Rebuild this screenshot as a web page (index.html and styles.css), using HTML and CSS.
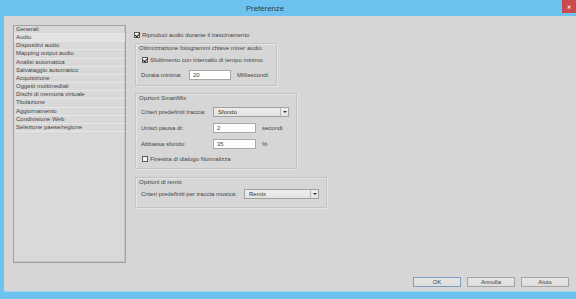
FILE: index.html
```html
<!DOCTYPE html>
<html lang="it">
<head>
    <meta charset="UTF-8">
    <title>Preferenze</title>
    <link rel="stylesheet" href="styles.css">
</head>
<body>
    <div class="window">
        <div class="titlebar">
            <span class="title">Preferenze</span>
            <span class="close">&#x2715;</span>
        </div>
        <div class="frame">
            <div class="main">
                <ul class="list">
                    <li>Generali</li>
                    <li class="selected">Audio</li>
                    <li>Dispositivi audio</li>
                    <li>Mapping output audio</li>
                    <li>Analisi automatica</li>
                    <li>Salvataggio automatico</li>
                    <li>Acquisizione</li>
                    <li>Oggetti multimediali</li>
                    <li>Dischi di memoria virtuale</li>
                    <li>Titolazione</li>
                    <li>Aggiornamento</li>
                    <li>Condivisione Web</li>
                    <li>Selezione paese/regione</li>
                </ul>

                <div class="panel">
                    <div class="check-row top-check">
                        <span class="box checked"></span>
                        <span>Riproduci audio durante il trascinamento</span>
                    </div>

                    <div class="group group-keyframes">
                        <div class="group-label">Ottimizzazione fotogrammi chiave mixer audio</div>
                        <div class="check-row inner-check">
                            <span class="box checked"></span>
                            <span>Sfoltimento con intervallo di tempo minimo</span>
                        </div>
                        <div class="field-row first-field">
                            <span class="label label-short">Durata minima:</span>
                            <span class="input input-ms">20</span>
                            <span class="unit">Millisecondi</span>
                        </div>
                    </div>

                    <div class="group group-smartmix">
                        <div class="group-label">Opzioni SmartMix</div>
                        <div class="field-row select-row">
                            <span class="label label-mid">Criteri predefiniti traccia:</span>
                            <span class="select select-mid">Sfondo<span class="arrow"></span></span>
                        </div>
                        <div class="field-row">
                            <span class="label label-mid">Unisci pausa di:</span>
                            <span class="input input-mid">2</span>
                            <span class="unit">secondi</span>
                        </div>
                        <div class="field-row">
                            <span class="label label-mid">Abbassa sfondo:</span>
                            <span class="input input-mid">35</span>
                            <span class="unit">%</span>
                        </div>
                        <div class="check-row last-check">
                            <span class="box"></span>
                            <span>Finestra di dialogo Normalizza</span>
                        </div>
                    </div>

                    <div class="group group-remix">
                        <div class="group-label">Opzioni di remix</div>
                        <div class="field-row remix-row">
                            <span class="label label-long">Criteri predefiniti per traccia musica:</span>
                            <span class="select select-long">Remix<span class="arrow"></span></span>
                        </div>
                    </div>
                </div>
            </div>

            <div class="footer">
                <button class="btn default">OK</button>
                <button class="btn">Annulla</button>
                <button class="btn">Aiuto</button>
            </div>
        </div>
    </div>
</body>
</html>
```

FILE: styles.css
```css
* {
    box-sizing: border-box;
}
body {
    margin: 0;
    font-family: "Liberation Sans", Arial, sans-serif;
    font-size: 6px;
    color: #444;
}
.window {
    width: 576px;
    height: 299px;
    display: flex;
    flex-direction: column;
    background-color: #d6d6d6;
    overflow: hidden;
}
.titlebar {
    height: 16px;
    flex-shrink: 0;
    background-color: #6dc2ef;
    display: flex;
    align-items: center;
    justify-content: center;
    padding-right: 46px;
    position: relative;
}
.title {
    font-size: 7.8px;
    color: #2b3f52;
    margin-top: 1px;
}
.close {
    position: absolute;
    top: 0;
    right: 0;
    width: 14px;
    height: 13px;
    background-color: #c9494f;
    color: #fff;
    font-size: 5px;
    font-weight: bold;
    display: flex;
    align-items: center;
    justify-content: center;
}
.frame {
    flex: 1;
    display: flex;
    flex-direction: column;
    border-left: 4px solid #6dc2ef;
    border-bottom: 7px solid #6dc2ef;
    box-shadow: inset 0 -1px 0 #9fd5f2;
}
.main {
    display: flex;
    padding-top: 9px;
    padding-left: 9px;
}
.list {
    list-style: none;
    margin: 0;
    padding: 0;
    width: 113px;
    height: 238px;
    background-color: #d9d9d9;
    border: 1px solid #a2a2a2;
    box-shadow: inset -1px -1px 0 #c2c2c2;
}
.list li {
    height: 8.17px;
    line-height: 7.4px;
    padding-left: 2px;
    border-bottom: 1px solid #e6e6e6;
    white-space: nowrap;
}
.list li.selected {
    background-color: #e3e3e3;
}
.panel {
    margin-left: 8px;
    display: flex;
    flex-direction: column;
    align-items: flex-start;
}
.check-row {
    display: flex;
    align-items: center;
    height: 8px;
    white-space: nowrap;
}
.box {
    width: 6px;
    height: 6px;
    border: 1px solid #5a5a5a;
    background-color: #f4f4f4;
    margin-right: 2px;
    position: relative;
}
.box.checked::after {
    content: "";
    position: absolute;
    left: 1px;
    top: -1px;
    width: 2px;
    height: 4px;
    border-right: 1px solid #222;
    border-bottom: 1px solid #222;
    transform: rotate(40deg);
}
.top-check {
    margin-top: 6px;
}
.group {
    margin-left: 1px;
    border: 1px solid #c4c4c4;
    box-shadow: inset 1px 1px 0 #e4e4e4, 1px 1px 0 #e4e4e4;
    padding: 0 0 5px 3px;
}
.group-label {
    height: 8px;
    line-height: 8px;
    white-space: nowrap;
}
.group-keyframes {
    width: 142px;
    margin-top: 4px;
}
.group-smartmix {
    width: 162px;
    margin-top: 7px;
}
.group-remix {
    width: 192px;
    margin-top: 8px;
    padding-bottom: 8px;
}
.inner-check {
    margin-top: 4px;
    margin-left: 3px;
}
.field-row {
    display: flex;
    align-items: center;
    height: 10px;
    margin-top: 6px;
    margin-left: 2px;
    white-space: nowrap;
}
.select-row {
    margin-top: 5px;
}
.remix-row {
    margin-top: 3px;
}
.last-check {
    margin-top: 6px;
    margin-left: 3px;
}
.label-short {
    width: 48px;
}
.label-mid {
    width: 72px;
}
.label-long {
    width: 103px;
}
.input {
    height: 10px;
    line-height: 8px;
    background-color: #fff;
    border: 1px solid #a8a8a8;
    padding-left: 3px;
    color: #444;
}
.input-ms {
    width: 42px;
}
.input-mid {
    width: 43px;
}
.unit {
    margin-left: 6px;
}
.select {
    height: 10px;
    line-height: 8px;
    border: 1px solid #a0a0a0;
    background: linear-gradient(#eeeeee, #e2e2e2);
    padding-left: 4px;
    color: #333;
    position: relative;
}
.select-mid {
    width: 76px;
}
.select-long {
    width: 75px;
}
.arrow {
    position: absolute;
    top: 0;
    right: 0;
    width: 8px;
    height: 8px;
    border-left: 1px solid #b8b8b8;
}
.arrow::after {
    content: "";
    position: absolute;
    left: 2px;
    top: 3px;
    border-left: 2px solid transparent;
    border-right: 2px solid transparent;
    border-top: 2px solid #333;
}
.footer {
    margin-top: auto;
    display: flex;
    justify-content: flex-end;
    gap: 6px;
    padding-right: 7px;
    padding-bottom: 5px;
}
.btn {
    width: 48px;
    height: 10px;
    padding: 0;
    font-family: "Liberation Sans", Arial, sans-serif;
    font-size: 6px;
    line-height: 8px;
    color: #444;
    background: linear-gradient(#e6e6e6, #dcdcdc);
    border: 1px solid #a4a4a4;
    border-radius: 0;
}
.btn.default {
    border-color: #7c9ec0;
}
```
